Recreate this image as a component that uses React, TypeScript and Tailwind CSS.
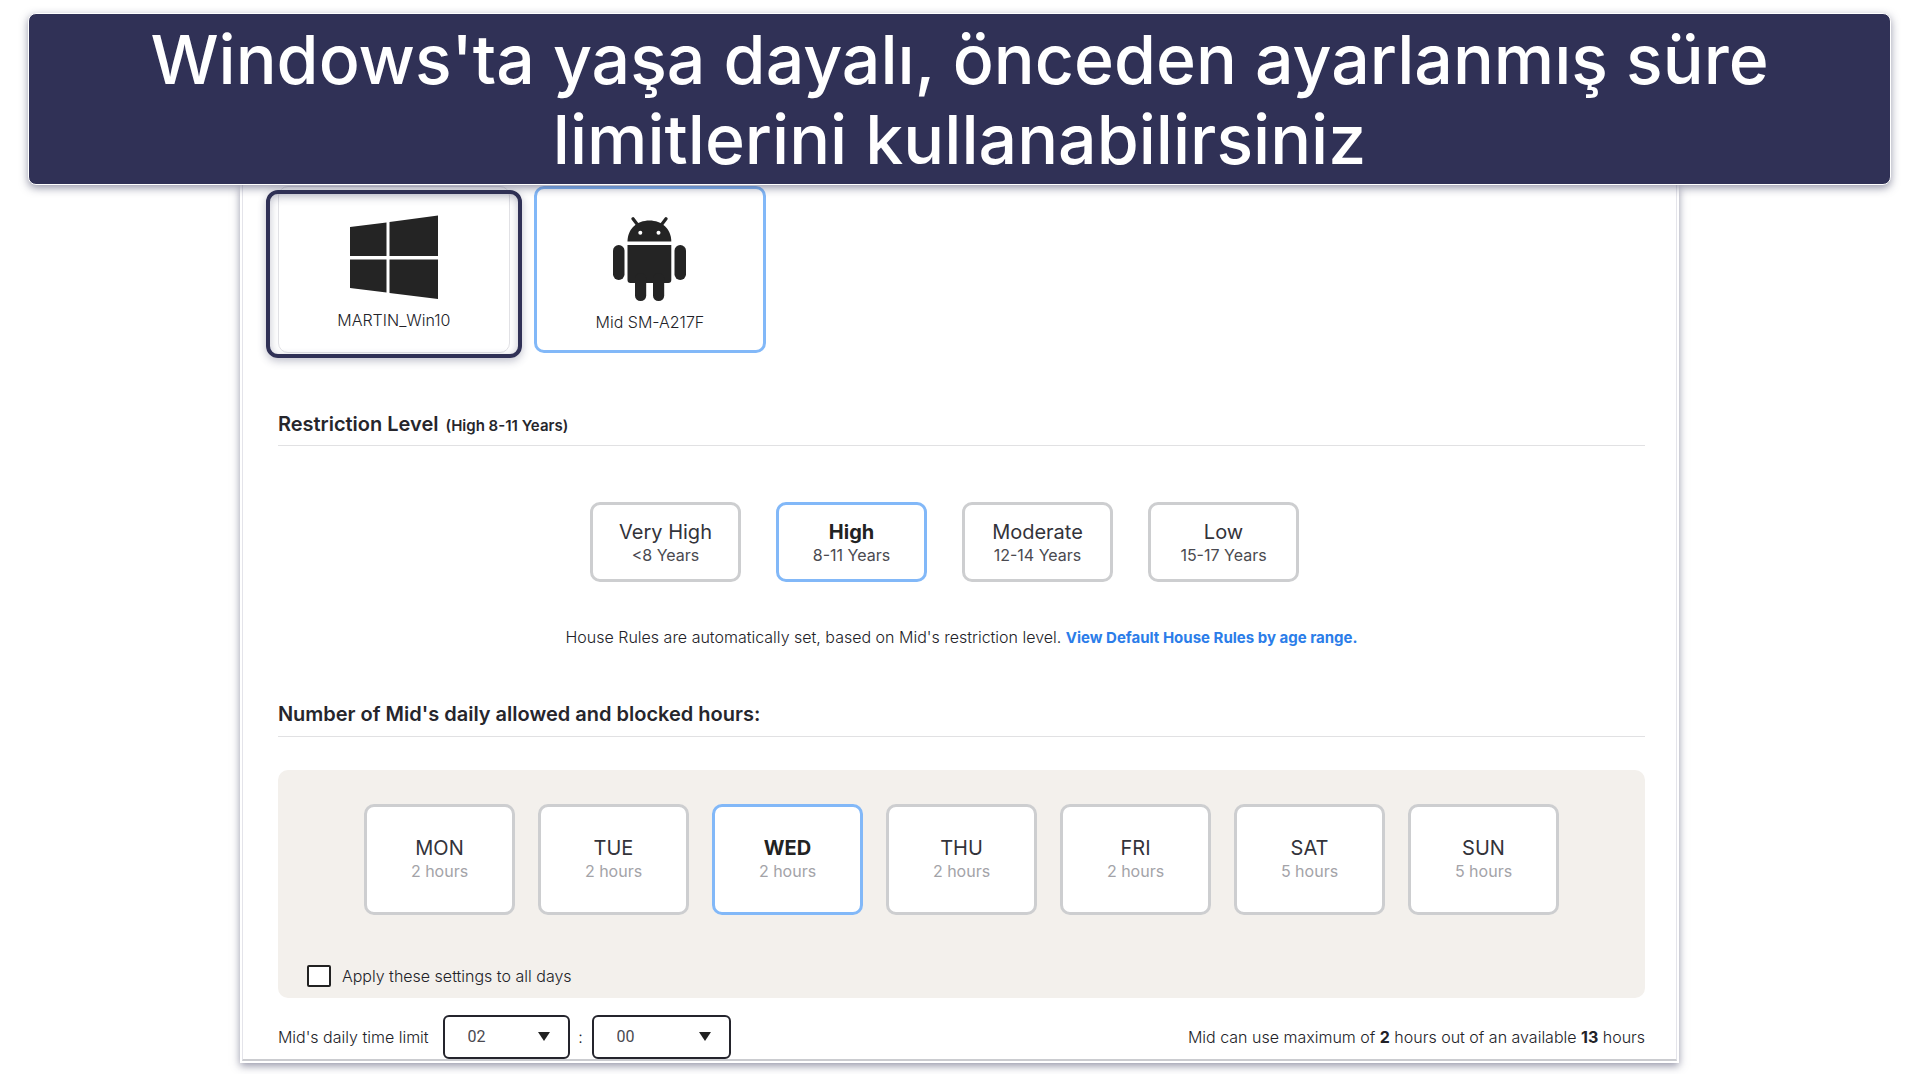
import { useState } from "react";

const levels = [
  { name: "Very High", range: "<8 Years" },
  { name: "High", range: "8-11 Years" },
  { name: "Moderate", range: "12-14 Years" },
  { name: "Low", range: "15-17 Years" },
];

const days = [
  { name: "MON", hours: 2 },
  { name: "TUE", hours: 2 },
  { name: "WED", hours: 2 },
  { name: "THU", hours: 2 },
  { name: "FRI", hours: 2 },
  { name: "SAT", hours: 5 },
  { name: "SUN", hours: 5 },
];

function WindowsIcon() {
  return (
    <svg viewBox="0 0 88 84" className="h-[84px] w-[88px] fill-[#242424]" aria-hidden="true">
      <path d="M0 12 36.500 7.500V41H0zM39.500 7 88 .5V41H39.500zM0 44.500H36.500V77.500L0 73zM39.500 44.500H88V84L39.500 78z" />
    </svg>
  );
}

function AndroidIcon() {
  return (
    <svg viewBox="0 0 73 84" className="h-[84px] w-[73px] fill-[#242424]" aria-hidden="true">
      <path d="M14.500 24.500C14.500 12 24 3.500 36.400 3.500S58.300 12 58.300 24.500z" />
      <path d="M20 1.800 25.500 9M53 1.800 47.500 9" stroke="#242424" strokeWidth="3.200" strokeLinecap="round" />
      <circle cx="27.300" cy="15.700" r="2" fill="#fff" />
      <circle cx="45.500" cy="15.700" r="2" fill="#fff" />
      <path d="M14.500 28H58.300V63a3 3 0 0 1-3 3H17.500a3 3 0 0 1-3-3z" />
      <rect x="0" y="28" width="11.500" height="35" rx="5.700" />
      <rect x="61.500" y="28" width="11.500" height="35" rx="5.700" />
      <rect x="22" y="56" width="11.200" height="28" rx="5.500" />
      <rect x="40" y="56" width="11.200" height="28" rx="5.500" />
    </svg>
  );
}

type ChoiceProps = {
  title: string;
  detail: string;
  selected: boolean;
  onSelect: () => void;
  tall?: boolean;
};

function Choice({ title, detail, selected, onSelect, tall }: ChoiceProps) {
  return (
    <button
      type="button"
      aria-pressed={selected}
      onClick={onSelect}
      className={`flex w-[151px] flex-col items-center justify-center rounded-[10px] border-3 bg-white ${
        tall ? "h-[111px] pb-0.5" : "h-20 pt-0.5"
      } ${selected ? "border-[#82b8f8]" : "border-[#cdced0]"}`}
    >
      <span className={`text-xl leading-6 ${selected ? "font-bold text-[#222222]" : "text-[#33333a]"}`}>{title}</span>
      <span className={`text-base leading-[22px] ${tall ? "text-[#a3a3a8]" : "text-[#4a4a50]"}`}>{detail}</span>
    </button>
  );
}

type TimeSelectProps = { label: string; options: string[]; initial: string; wide?: boolean };

function TimeSelect({ label, options, initial, wide }: TimeSelectProps) {
  return (
    <span className={`relative ${wide ? "w-[139px]" : "w-[127px]"}`}>
      <select
        aria-label={label}
        defaultValue={initial}
        className="h-11 w-full appearance-none rounded-md border-2 border-[#24242c] bg-white pl-[23px] font-[Roboto,sans-serif] text-base font-normal text-[#4a4a50]"
      >
        {options.map((o) => (
          <option key={o}>{o}</option>
        ))}
      </select>
      <svg viewBox="0 0 12 9" className="pointer-events-none absolute top-[17px] right-5 h-[9px] w-3 fill-[#222222]" aria-hidden="true">
        <path d="M0 0H12L6 9z" />
      </svg>
    </span>
  );
}

const hourOptions = Array.from({ length: 24 }, (_, i) => String(i).padStart(2, "0"));
const minuteOptions = ["00", "15", "30", "45"];

export default function App() {
  const [level, setLevel] = useState("High");
  const [day, setDay] = useState("WED");

  return (
    <div className="bg-white pt-[13px] pb-3 font-[Inter,sans-serif] text-[#222228]">
      <header className="relative z-10 mx-7 rounded-lg border border-white bg-[#303156] px-20 py-[5px] text-center shadow-[0_3px_8px_rgba(48,49,86,0.5)]">
        <h1 className="text-[68px] leading-20 font-medium text-white">
          Windows'ta yaşa dayalı, önceden ayarlanmış süre
          <br />
          limitlerini kullanabilirsiniz
        </h1>
      </header>

      <main className="mx-auto w-3/4 border-2 border-t-0 border-white bg-white shadow-[0_3px_8px_rgba(48,49,86,0.5)]">
        <div className="border-x border-b-2 border-x-[#e4e4ea] border-b-[#cbccd0] pt-px pr-[31px] pl-[35px]">
          <div className="flex gap-6">
            <div className="relative">
              <button type="button" className="flex h-[167px] w-[232px] flex-col items-center gap-[11px] rounded-[10px] border border-[#e2e2e6] pt-7">
                <WindowsIcon />
                <span className="text-base leading-5 font-light">MARTIN_Win10</span>
              </button>
              <span className="pointer-events-none absolute -inset-x-3 top-1 -bottom-[5px] rounded-xl border-4 border-[#303156] shadow-[0_3px_8px_rgba(48,49,86,0.3),inset_0_3px_8px_rgba(48,49,86,0.3)]" />
            </div>
            <button type="button" className="flex h-[167px] w-[232px] flex-col items-center gap-[11px] rounded-[10px] border-3 border-[#82b8f8] pt-7">
              <AndroidIcon />
              <span className="text-base leading-5 font-light">Mid SM-A217F</span>
            </button>
          </div>

          <h2 className="mt-[59px] border-b border-[#e1e1e3] pb-[9px] text-xl leading-6 font-semibold text-[#26262c]">
            Restriction Level <small className="ml-0.5 text-[15px] leading-5">(High 8-11 Years)</small>
          </h2>

          <div className="mt-14 mr-[34px] flex justify-center gap-[35px]">
            {levels.map((l) => (
              <Choice key={l.name} title={l.name} detail={l.range} selected={level === l.name} onSelect={() => setLevel(l.name)} />
            ))}
          </div>

          <p className="mt-[45px] text-center text-base leading-5 font-light">
            House Rules are automatically set, based on Mid's restriction level.{" "}
            <a href="#rules" className="text-[15px] leading-none font-bold text-[#2b7de9]">
              View Default House Rules by age range.
            </a>
          </p>

          <h2 className="mt-[55px] border-b border-[#e1e1e3] pb-[10px] text-xl leading-6 font-semibold text-[#26262c]">
            Number of Mid's daily allowed and blocked hours:
          </h2>

          <section className="mt-[33px] rounded-[10px] bg-[#f3f0ec] px-[29px] pt-[34px] pb-[11px]">
            <div className="flex justify-center gap-[23px]">
              {days.map((d) => (
                <Choice key={d.name} title={d.name} detail={`${d.hours} hours`} selected={day === d.name} onSelect={() => setDay(d.name)} tall />
              ))}
            </div>
            <label className="mt-[50px] flex w-fit items-center gap-[11px] text-base leading-[22px] font-light">
              <input
                type="checkbox"
                className="h-[22px] w-6 appearance-none rounded-xs border-2 border-[#222222] bg-white checked:bg-[#222222]"
              />
              Apply these settings to all days
            </label>
          </section>

          <div className="mt-[17px] flex items-center text-base leading-5 font-light">
            <span className="mr-[14px]">Mid's daily time limit</span>
            <TimeSelect label="Hours" options={hourOptions} initial="02" />
            <span className="w-[22px] text-center">:</span>
            <TimeSelect label="Minutes" options={minuteOptions} initial="00" wide />
            <span className="ml-auto">
              Mid can use maximum of <b className="font-bold">2</b> hours out of an available{" "}
              <b className="font-bold">13</b> hours
            </span>
          </div>
        </div>
      </main>
    </div>
  );
}
